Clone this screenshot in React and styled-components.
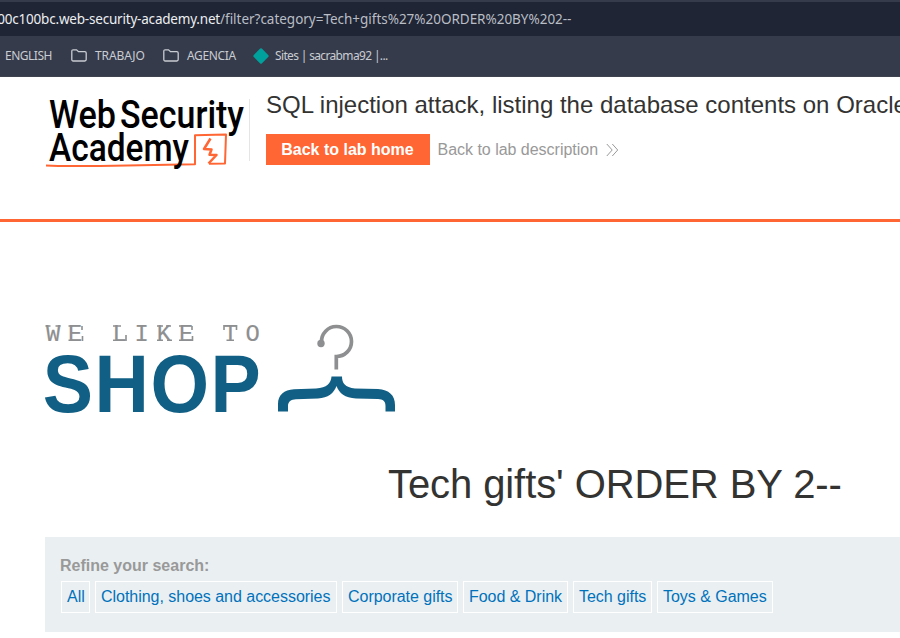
import React from "react";
import styled, { createGlobalStyle } from "styled-components";

const Global = createGlobalStyle`
  * { box-sizing: border-box; }
  html, body { margin: 0; background: #fff; overflow: hidden; }
  body { font-family: "Liberation Sans", Arial, sans-serif; font-size: 16px; color: #333332; }
`;

const Page = styled.div`
  width: 900px;
  height: 638px;
  overflow: hidden;
`;

const Browser = styled.div`
  height: 77px;
  background: #353b4b;
  border-bottom: 1px solid #3f4350;
  font-family: "Noto Sans", sans-serif;
`;

const AddressBar = styled.div`
  display: flex;
  height: 36px;
  border-top: 2px solid #353b4b;
  background: #1f2534;
  font-size: 13.5px;
  line-height: 34px;
  white-space: pre;
`;

const Host = styled.span`
  display: flex;
  justify-content: flex-end;
  width: 220px;
  overflow: hidden;
  color: #eceef1;
  letter-spacing: -0.2px;
`;

const Path = styled.span`
  color: #b9bdc5;
  letter-spacing: -0.02px;
`;

const Bookmarks = styled.nav`
  display: flex;
  align-items: center;
  height: 40px;
  padding: 0 0 1px 5px;
  color: #c9ccd2;
  font-size: 12px;
`;

const Bookmark = styled.span`
  display: flex;
  align-items: center;
  flex: none;
  gap: ${(p) => p.$gap || 0}px;
  width: ${(p) => p.$width}px;
  letter-spacing: ${(p) => p.$tracking || 0}px;
  white-space: nowrap;
`;

const Icon = styled.svg`
  display: block;
  flex: none;
  overflow: visible;
`;

const Header = styled.header`
  display: flex;
  height: 145px;
  padding: 12px 0 0 44px;
  border-bottom: 3px solid #ff6633;
`;

const BrandCell = styled.div`
  flex: none;
  width: 206px;
  height: 72px;
  margin-right: 16px;
  background: linear-gradient(#e5e5e5, #e5e5e5) right 10px / 1px 62px no-repeat;
`;

const LabTitle = styled.h2`
  margin: 2px 0 15px;
  font-size: 24px;
  font-weight: 400;
  line-height: 28px;
  white-space: nowrap;
`;

const LabLinks = styled.div`
  display: flex;
  align-items: center;
  gap: 7.5px;
`;

const HomeButton = styled.a`
  display: block;
  width: 164px;
  height: 31px;
  padding-right: 1px;
  background: #ff6633;
  color: #fff;
  font-weight: 700;
  line-height: 31px;
  text-align: center;
`;

const DescriptionLink = styled.a`
  display: flex;
  align-items: center;
  gap: 8px;
  color: #999;
  letter-spacing: -0.02px;
`;

const Shop = styled.main`
  padding: 98px 0 0 44px;
`;

const Heading = styled.h1`
  height: 46px;
  margin: 43px 0 30px 344px;
  font-size: 40px;
  font-weight: 400;
  letter-spacing: -0.09px;
  line-height: 46px;
  white-space: nowrap;
`;

const Filters = styled.section`
  height: 95px;
  margin-left: 1px;
  padding: 19px 0 0 15px;
  background: #eaeff2;
`;

const FilterLabel = styled.div`
  height: 25px;
  color: #999;
  font-weight: 700;
  line-height: 19px;
`;

const FilterRow = styled.div`
  display: flex;
  gap: 5px;
  padding-left: 1px;
`;

const Filter = styled.a`
  width: ${(p) => p.$width}px;
  height: 32px;
  padding-left: 5px;
  border: 1px solid #fff;
  color: #0072bc;
  letter-spacing: -0.03px;
  line-height: 29px;
  white-space: nowrap;
`;

const Tagline = styled.text`
  fill: #8e8f90;
  stroke: #8e8f90;
  stroke-width: 0.2px;
  font-family: "Liberation Mono", monospace;
  font-size: 23.8px;
  letter-spacing: 7.9px;
`;

const ShopName = styled.text`
  fill: #115f84;
  font-family: "Liberation Sans", sans-serif;
  font-size: 81px;
  font-weight: 700;
  letter-spacing: 1.6px;
`;

const FolderIcon = () => (
  <Icon width="16" height="13" viewBox="0 0 16 13" fill="none" stroke="#c9ccd2" strokeWidth="1.3">
    <path d="M.8 2.2Q.8.8 2.2.8H5.5L7.5 2.7H13.8Q15.2 2.7 15.2 4.1V10.6Q15.2 12 13.8 12H2.2Q.8 12 .8 10.6Z" />
  </Icon>
);

const SitesIcon = () => (
  <Icon width="16" height="16" viewBox="0 0 16 16">
    <path d="M7.2.6Q8 0 8.8.6L15.4 7.2Q16 8 15.4 8.8L8.8 15.4Q8 16 7.2 15.4L.6 8.8Q0 8 .6 7.2Z" fill="#00a19c" />
  </Icon>
);

const Chevrons = () => (
  <Icon width="13" height="14" viewBox="0 0 13 14" fill="none" stroke="#999" strokeWidth="1">
    <path d="M.8 1L6.2 7 .8 13M6.3 1L11.7 7 6.3 13" />
  </Icon>
);

const AcademyLogo = () => (
  <Icon width="204" height="82" viewBox="44 89 204 82">
    <g fill="#000" fontFamily="Roboto" fontWeight="500" fontSize="38">
      <text x="49" y="128" textLength="67" lengthAdjust="spacingAndGlyphs">Web</text>
      <text x="120" y="128" textLength="124" lengthAdjust="spacingAndGlyphs">Security</text>
    </g>
    <g fill="none" stroke="#ff6633" strokeLinejoin="round">
      <path d="M46 165.4L58 166.1 100 166 195 164.2V135.2L226 134.6 225 163.5 209 163.8" strokeWidth="2" />
      <path d="M210.5 138.5L204 149 211.5 149.5 209.5 154.8 216.5 155 208.5 163.5" strokeWidth="2.5" />
    </g>
    <text x="49" y="160.5" fill="#000" fontFamily="Roboto" fontWeight="500" fontSize="38" textLength="140" lengthAdjust="spacingAndGlyphs">Academy</text>
  </Icon>
);

const ShopLogo = () => (
  <Icon width="354" height="98" viewBox="44 320 354 98">
    <Tagline x="45.9" y="341">WE LIKE TO</Tagline>
    {/* slab ends of the tagline's strokes */}
    <path
      d="M45.5 326h5M55.5 326h5M68.5 326h4M68.5 340.2h4M82 326v4M82.5 336v5M113 340.2h4M113 326h8M126 335v6M157 326h6M166 326h5M157 340.2h6M167 340.2h5M179 326h4M179 340.2h4M192 326v4M192.5 336v5M224 325v5M236.5 325v5M226.5 340.2h7.5"
      fill="none"
      stroke="#8e8f90"
      strokeWidth="1.6"
    />
    <ShopName transform="translate(42.8 412) scale(.93 1)">SHOP</ShopName>
    <path d="M321.5 342A15 15 0 1 1 336.3 356.5V369.5" fill="none" stroke="#8e8f90" strokeWidth="3.7" />
    <circle cx="321" cy="343.5" r="3.7" fill="#8e8f90" />
    <path d="M331.5 376.5H342C342 383 345 387.5 355 388.5L378 389C389 390 395 395 395 405V411.5H385.5V406C385.5 401 383 399.5 378 399L356 398.5C345 398 339 393 336.5 386C334 393 328 398 318 398.5L296 399.2C291 399.5 288 401.5 288 406V411.5H278V404C278 395 284 390 294 389.3L316 388.5C327 388 331 383 331.5 376.5Z" fill="#115f84" />
  </Icon>
);

const filters = [
  ["All", 29], ["Clothing, shoes and accessories", 242], ["Corporate gifts", 116],
  ["Food & Drink", 105], ["Tech gifts", 79], ["Toys & Games", 116],
];

export default function App() {
  return (
    <Page>
      <Global />
      <Browser>
        <AddressBar>
          <Host>00c100bc.web-security-academy.net</Host>
          <Path>/filter?category=Tech+gifts%27%20ORDER%20BY%202--</Path>
        </AddressBar>
        <Bookmarks>
          <Bookmark $width={66} $tracking={-0.5}>ENGLISH</Bookmark>
          <Bookmark $width={92} $gap={8} $tracking={-0.1}><FolderIcon />TRABAJO</Bookmark>
          <Bookmark $width={90} $gap={8} $tracking={-0.35}><FolderIcon />AGENCIA</Bookmark>
          <Bookmark $width={140} $gap={6} $tracking={-0.65}><SitesIcon />Sites | sacrabma92 |...</Bookmark>
        </Bookmarks>
      </Browser>
      <Header>
        <BrandCell><AcademyLogo /></BrandCell>
        <div>
          <LabTitle>SQL injection attack, listing the database contents on Oracle</LabTitle>
          <LabLinks>
            <HomeButton>Back to lab home</HomeButton>
            <DescriptionLink>Back to lab description <Chevrons /></DescriptionLink>
          </LabLinks>
        </div>
      </Header>
      <Shop>
        <ShopLogo />
        <Heading>Tech gifts' ORDER BY 2--</Heading>
        <Filters>
          <FilterLabel>Refine your search:</FilterLabel>
          <FilterRow>
            {filters.map(([name, width]) => <Filter key={name} $width={width}>{name}</Filter>)}
          </FilterRow>
        </Filters>
      </Shop>
    </Page>
  );
}
